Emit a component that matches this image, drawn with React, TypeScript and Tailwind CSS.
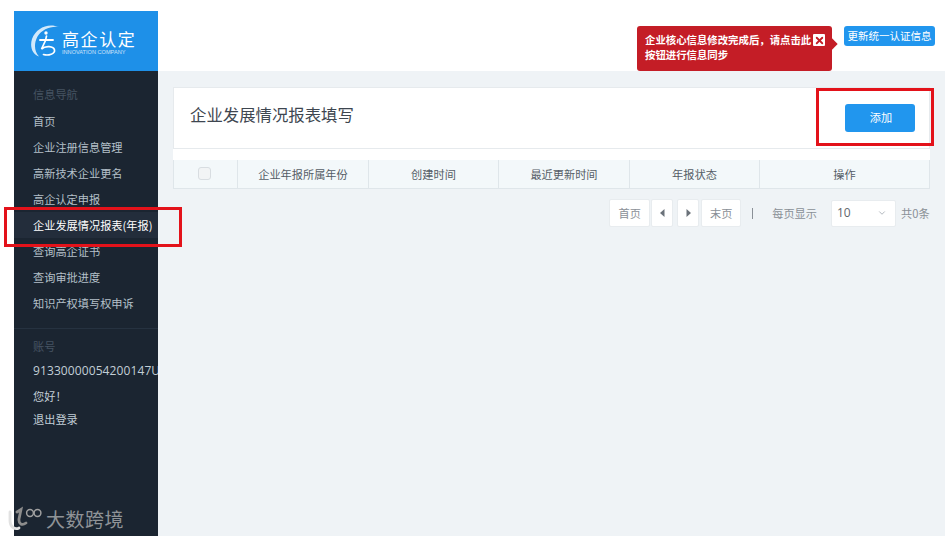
import { ChevronDown, X } from "lucide-react";

const navItems = [
  "首页",
  "企业注册信息管理",
  "高新技术企业更名",
  "高企认定申报",
  "企业发展情况报表(年报)",
  "查询高企证书",
  "查询审批进度",
  "知识产权填写权申诉",
];

const columns = ["企业年报所属年份", "创建时间", "最近更新时间", "年报状态", "操作"];

function LogoMark() {
  return (
    <svg width="30" height="34" viewBox="0 0 30 34" fill="none" stroke="white" strokeLinecap="round">
      {/* swoosh */}
      <path d="M29 3C18 -1.5 6 4 2 15C-0.5 23 2.5 30.5 9 32.5C4.5 27.5 3.5 20 7.5 12.5C12 5.5 20 2 29 3Z" fill="white" stroke="none" opacity="0.8" />
      <circle cx="16" cy="9" r="1.7" fill="white" stroke="none" />
      <path d="M10 16H23" strokeWidth="1.9" />
      <path d="M16.5 12L15.5 16.5L11.5 25C15.5 21.5 23.5 22 24.5 26C25.2 29.8 18.5 32 13.5 30.5" strokeWidth="1.7" />
    </svg>
  );
}

function WatermarkMark() {
  return (
    <svg width="36" height="26" viewBox="0 0 36 26" fill="none" strokeLinecap="round" strokeWidth="2.8">
      <path d="M3 6V15C3 21 8 24 12 22" stroke="#e2e2e2" />
      <path d="M10 6L14 3.5L12 13C11.5 18 15 20 19 17" stroke="#8c8c8c" />
      <circle cx="23" cy="7" r="3.4" stroke="#a0a0a0" strokeWidth="1.5" />
      <circle cx="30.5" cy="7" r="3.4" stroke="#a0a0a0" strokeWidth="1.5" />
    </svg>
  );
}

function PageButton({ children, width }: { children: React.ReactNode; width: string }) {
  return (
    <button className={`flex h-[28px] items-center justify-center rounded-[2px] border border-[#e8ecef] bg-white text-[#8a9097] ${width}`}>
      {children}
    </button>
  );
}

export default function App() {
  return (
    <div
      className="relative flex h-[538px] w-[948px] overflow-hidden bg-white pb-[2px] pl-[14px] pr-[3px] text-[11.2px]"
      style={{ fontFamily: '"Noto Sans CJK SC", "Noto Sans", sans-serif' }}
    >
      {/* Sidebar */}
      <aside className="flex w-[144px] shrink-0 flex-col pt-[11px]">
        <div className="flex h-[60px] items-center gap-[2px] bg-[#1e90e8] pl-[16px]">
          <LogoMark />
          <div className="flex flex-col pt-[3px] text-white">
            <span className="text-[17px] leading-[17px] tracking-[1.6px]">高企认定</span>
            <span className="mt-[2px] whitespace-nowrap text-[5.6px] leading-[7px] opacity-75" style={{ fontFamily: '"Liberation Sans", sans-serif' }}>
              INNOVATION COMPANY
            </span>
          </div>
        </div>
        <nav className="flex flex-1 flex-col bg-[#1b2531] pt-[14px]">
          <div className="px-[19px] text-[#465362] leading-[18px]">信息导航</div>
          <ul className="mt-[5px] border-b border-[#263240] pb-[12px]">
            {navItems.map((item, i) => (
              <li
                key={item}
                className={`flex h-[26px] items-center whitespace-nowrap px-[19px] ${
                  i === 4 ? "bg-[#232d3b] text-white" : "text-[#b4c0c9]"
                }`}
              >
                {item}
              </li>
            ))}
          </ul>
          <div className="mt-[8px] px-[19px] leading-[18px] text-[#465362]">账号</div>
          <div
            className="mt-[4px] h-[24px] overflow-hidden whitespace-nowrap pl-[19px] text-[12px] leading-[24px] tracking-[0.1px] text-[#c2ced6]"
            style={{ fontFamily: '"Open Sans", sans-serif' }}
          >
            91330000054200147U
          </div>
          <div className="mt-[3px] px-[19px] leading-[20px] text-[#c2ced6]">您好！</div>
          <div className="mt-[3px] px-[19px] leading-[20px] text-[#c2ced6]">退出登录</div>
        </nav>
      </aside>

      {/* Main column */}
      <main className="flex min-w-0 flex-1 flex-col">
        <header className="relative flex h-[71px] shrink-0 items-start justify-end bg-white pr-[10px] pt-[26px]">
          <button className="flex h-[20px] w-[91px] items-center justify-center rounded-[3px] bg-[#2196ee] text-[10.5px] text-white">
            更新统一认证信息
          </button>
          <div className="absolute left-[479px] top-[26px] h-[45px] w-[195px] rounded-[3px] bg-[#c41d26] px-[8px] pt-[6px] text-[10.4px] font-bold leading-[15px] text-white">
            <div className="whitespace-nowrap">企业核心信息修改完成后，请点击此</div>
            <div>按钮进行信息同步</div>
            <span className="absolute right-[7px] top-[8px] flex h-[12px] w-[12px] items-center justify-center rounded-[1px] bg-white">
              <X size={11} strokeWidth={4} color="#c41d26" />
            </span>
            <span className="absolute -right-[4px] top-[14px] h-[8px] w-[8px] rotate-45 bg-[#c41d26]" />
          </div>
        </header>

        <section className="flex flex-1 flex-col bg-[#eff3f6] pl-[15px] pr-[15px] pt-[16px]">
          <div className="flex h-[62px] shrink-0 items-center justify-between border border-[#e6eaed] bg-white pl-[16px] pr-[14px]">
            <h1 className="mb-[8px] text-[16.4px] font-normal text-[#3e4650]">企业发展情况报表填写</h1>
            <button className="mb-[1px] h-[28px] w-[70px] rounded-[3px] bg-[#2196ee] pl-[2px] text-white">添加</button>
          </div>

          <div className="h-[11px] shrink-0 bg-white" />

          <div className="grid h-[29px] shrink-0 grid-cols-[64px_131px_130px_131px_130px_1fr] border-b border-l border-[#dfe6ea] bg-[#f3f8fa] text-[#555d66]">
            <div className="flex items-center justify-center border-r border-[#dfe6ea] pb-[2px] pr-[2px]">
              <span className="h-[13px] w-[13px] rounded-[3px] border border-[#d8dde1] bg-[#f2f4f5]" />
            </div>
            {columns.map((c) => (
              <div key={c} className="flex items-center justify-center border-r border-[#dfe6ea]">
                {c}
              </div>
            ))}
          </div>

          <div className="-mr-[2px] mt-[10px] flex items-center justify-end text-[#8a9097]">
            <PageButton width="w-[41px]">首页</PageButton>
            <PageButton width="ml-[1px] w-[22px]">
              <svg width="5" height="8" viewBox="0 0 5 8"><path d="M4.5 0V8L0 4Z" fill="#6b727a" /></svg>
            </PageButton>
            <PageButton width="ml-[4px] w-[22px]">
              <svg width="5" height="8" viewBox="0 0 5 8"><path d="M0.5 0V8L5 4Z" fill="#6b727a" /></svg>
            </PageButton>
            <PageButton width="ml-[2px] w-[40px]">末页</PageButton>
            <span className="ml-[11px] h-[11px] w-[1px] bg-[#8a9097]" />
            <span className="ml-[19px]">每页显示</span>
            <div className="ml-[14px] flex h-[27px] w-[65px] items-center justify-between rounded-[2px] border border-[#e8ecef] bg-white pl-[5px] pr-[8px] text-[12px] text-[#5f666d]" style={{ fontFamily: '"Open Sans", sans-serif' }}>
              10
              <ChevronDown size={10} color="#a4abb2" />
            </div>
            <span className="ml-[5px] w-[31px] whitespace-nowrap">共0条</span>
          </div>
        </section>
      </main>

      {/* Red annotation boxes drawn over the page */}
      <div className="absolute left-[4px] top-[207px] h-[40px] w-[178px] border-[3px] border-[#e3121a]" />
      <div className="absolute left-[816px] top-[88px] h-[58px] w-[118px] border-[3px] border-[#e3121a]" />

      {/* Watermark */}
      <div className="absolute left-[7px] top-[506px] flex items-center gap-[3px]">
        <WatermarkMark />
        <span className="text-[19px] leading-[26px] tracking-[0.5px] text-[#8f9397]">大数跨境</span>
      </div>
    </div>
  );
}
